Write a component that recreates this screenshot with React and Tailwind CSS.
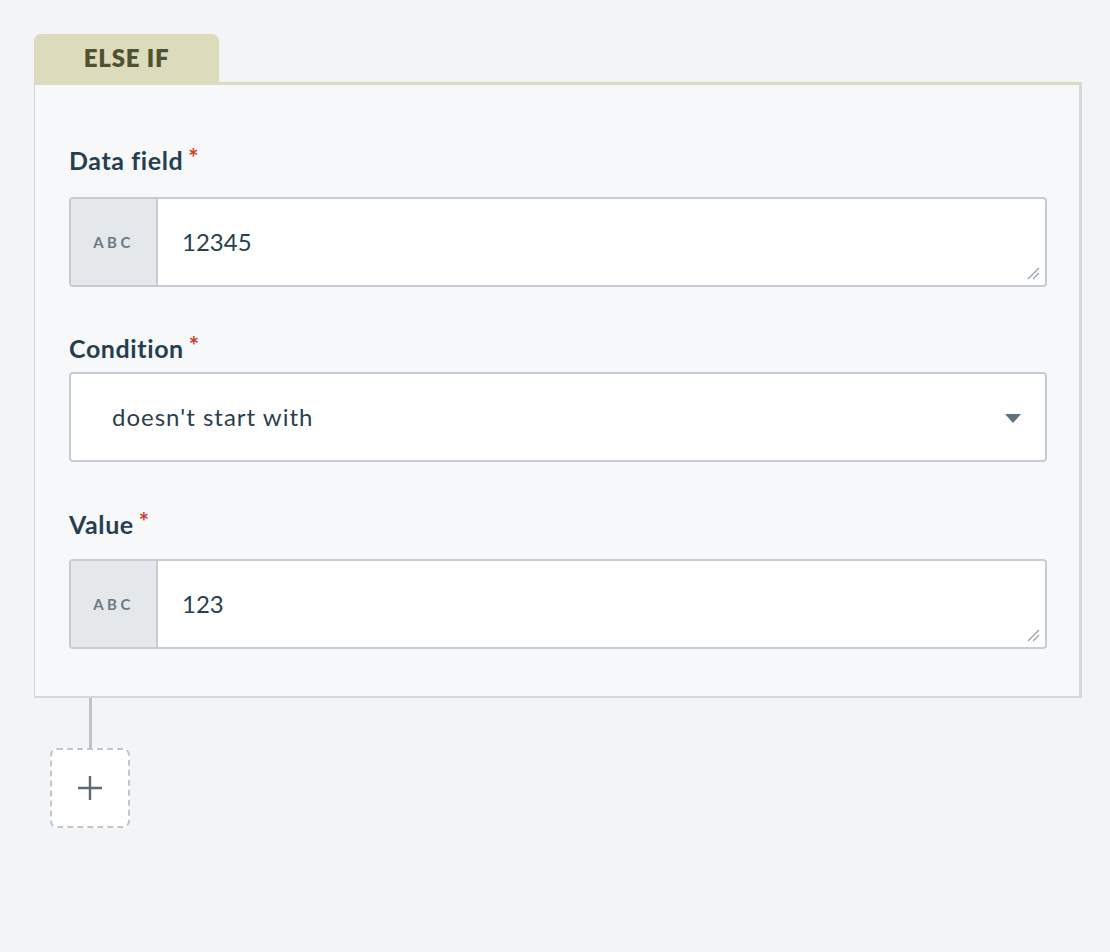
import React from 'react';

const font = { fontFamily: '"Lato", "Open Sans", sans-serif' };

const Label = ({ children }) => (
  <div className="flex items-start h-[30px] text-[25px] leading-[30px] font-bold tracking-[0.6px] text-[#263f4f]">
    {children}
    <span className="ml-[5px] text-[24px] leading-[26px] text-[#c8402a]">*</span>
  </div>
);

const ResizeGrip = () => (
  <svg className="absolute right-[5px] bottom-[5px]" width="14" height="14" viewBox="0 0 14 14">
    <line x1="2" y1="13" x2="13" y2="2" stroke="#9aa1a7" strokeWidth="1.3" />
    <line x1="7" y1="13" x2="13" y2="7" stroke="#9aa1a7" strokeWidth="1.3" />
  </svg>
);

const TextField = ({ value }) => (
  <div className="relative flex h-[90px] rounded-[4px] border-2 border-[#c5ccd3] bg-white overflow-hidden">
    <div className="flex w-[87px] shrink-0 items-center justify-center border-r-2 border-[#c5ccd3] bg-[#e5e8eb] text-[15px] font-bold tracking-[3.5px] text-[#6b7984]">
      ABC
    </div>
    <div className="flex items-center pl-[24px] text-[24px] text-[#2b3f4d]">{value}</div>
    <ResizeGrip />
  </div>
);

export default function App() {
  return (
    <div className="min-h-[952px] w-full bg-[#f3f4f6] pt-[34px] pl-[34px] pr-[28px]" style={font}>
      <div className="flex">
        <div className="flex h-[48px] w-[185px] items-center justify-center rounded-t-[7px] bg-[#dcdbbc] text-[24px] font-extrabold tracking-[0.8px] text-[#4e5231]">
          ELSE IF
        </div>
      </div>
      <div className="border-t-[3px] border-t-[#dcdbbc] border-l border-r-[3px] border-b-2 border-[#d3d8dd] bg-[#f7f8fa] pl-[34px] pr-[32px] pt-[60px] pb-[47px]">
        <Label>Data field</Label>
        <div className="mt-[22px]">
          <TextField value="12345" />
        </div>

        <div className="mt-[46px]">
          <Label>Condition</Label>
        </div>
        <div className="mt-[9px] relative flex h-[90px] items-center rounded-[4px] border-2 border-[#c5ccd3] bg-white pl-[41px] text-[24px] tracking-[1px] text-[#2b3f4d]">
          doesn't start with
          <svg className="absolute right-[24px] top-[40px]" width="16" height="9" viewBox="0 0 16 9">
            <path d="M0 0 H16 L8 9 Z" fill="#5f6f7b" />
          </svg>
        </div>

        <div className="mt-[47px]">
          <Label>Value</Label>
        </div>
        <div className="mt-[20px]">
          <TextField value="123" />
        </div>
      </div>
      <div className="ml-[55px] h-[50px] w-[3px] bg-[#bcc4cc]" />
      <div className="ml-[16px] flex h-[80px] w-[80px] items-center justify-center rounded-[7px] border-2 border-dashed border-[#bfc6cd] bg-white">
        <svg width="26" height="26" viewBox="0 0 26 26">
          <path d="M13 1 V25 M1 13 H25" stroke="#5b6a76" strokeWidth="2.4" />
        </svg>
      </div>
    </div>
  );
}
